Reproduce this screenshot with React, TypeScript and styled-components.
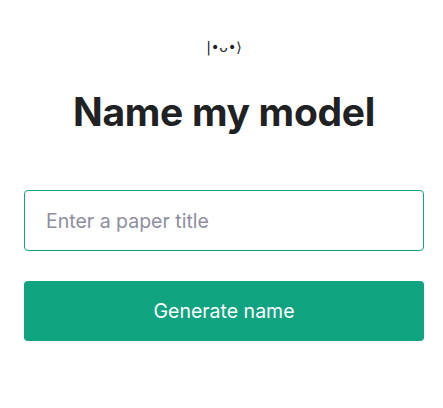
import React from "react";
import styled, { createGlobalStyle } from "styled-components";

const Global = createGlobalStyle`
  html, body { margin: 0; padding: 0; background: #ffffff; }
  body { font-family: Inter, "Noto Sans", sans-serif; color: #202123; }
  * { box-sizing: border-box; }
`;

const Page = styled.main`
  width: 400px;
  margin-left: 24px;
  padding-top: 37px;
  display: flex;
  flex-direction: column;
  align-items: stretch;
`;

const Logo = styled.div`
  text-align: center;
  font-family: "DejaVu Sans", sans-serif;
  font-size: 14px;
  line-height: 20px;
  color: #202123;
`;

const Title = styled.h1`
  margin: 31px 0 0;
  text-align: center;
  font-family: Inter, sans-serif;
  font-weight: 700;
  font-size: 39px;
  line-height: 48px;
  color: #202123;
  letter-spacing: -0.3px;
`;

const Form = styled.form`
  margin-top: 54px;
  display: flex;
  flex-direction: column;
  gap: 30px;
`;

const Input = styled.input`
  width: 100%;
  height: 61px;
  padding: 0 21px;
  border: 1px solid #10a37f;
  border-radius: 4px;
  font-family: Inter, sans-serif;
  font-size: 19.5px;
  color: #202123;
  outline: none;
  &::placeholder { color: #8e8ea0; }
`;

const Button = styled.button`
  width: 100%;
  height: 60px;
  border: none;
  border-radius: 4px;
  background: #10a37f;
  color: #ffffff;
  font-family: Inter, sans-serif;
  font-size: 19.5px;
  font-weight: 400;
  cursor: pointer;
`;

export default function App() {
  return (
    <>
      <Global />
      <Page>
        <Logo>|•ᴗ•⟩</Logo>
        <Title>Name my model</Title>
        <Form onSubmit={(e) => e.preventDefault()}>
          <Input type="text" placeholder="Enter a paper title" />
          <Button type="submit">Generate name</Button>
        </Form>
      </Page>
    </>
  );
}
